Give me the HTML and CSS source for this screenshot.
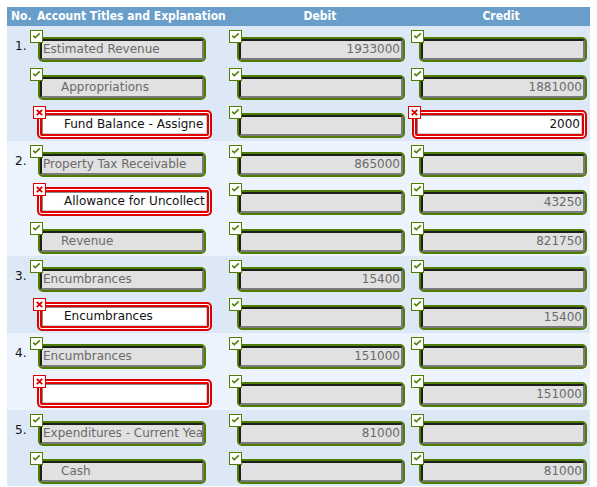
FILE: index.html
```html
<!DOCTYPE html>
<html>
<head>
<meta charset="utf-8">
<link rel="stylesheet" href="styles.css">
</head>
<body>
<svg class="defs" width="0" height="0">
  <symbol id="ok" viewBox="0 0 13 13">
    <rect x="0.5" y="0.5" width="12" height="12" fill="#fff" stroke="#4f7d00"/>
    <polyline points="3.2,5.6 5.3,7.6 9.8,3.4" fill="none" stroke="#4f8209" stroke-width="1.6"/>
  </symbol>
  <symbol id="no" viewBox="0 0 13 13">
    <rect x="0.5" y="0.5" width="12" height="12" fill="#fff" stroke="#e00000"/>
    <path d="M3.8 3.8 L9.2 9.2 M9.2 3.8 L3.8 9.2" stroke="#e00000" stroke-width="1.9"/>
  </symbol>
</svg>
<div class="sheet">
  <div class="head">
    <div class="h-no">No.</div>
    <div class="h-acct">Account Titles and Explanation</div>
    <div class="h-c">Debit</div>
    <div class="h-c">Credit</div>
  </div>

  <div class="group a">
    <div class="row">
      <div class="no">1.</div>
      <div class="cell"><div class="fld"><div class="in">Estimated Revenue</div><svg class="badge"><use href="#ok"/></svg></div></div>
      <div class="cell"><div class="fld"><div class="in num">1933000</div><svg class="badge"><use href="#ok"/></svg></div></div>
      <div class="cell"><div class="fld"><div class="in num"></div><svg class="badge"><use href="#ok"/></svg></div></div>
    </div>
    <div class="row">
      <div class="no"></div>
      <div class="cell"><div class="fld"><div class="in ind">Appropriations</div><svg class="badge"><use href="#ok"/></svg></div></div>
      <div class="cell"><div class="fld"><div class="in num"></div><svg class="badge"><use href="#ok"/></svg></div></div>
      <div class="cell"><div class="fld"><div class="in num">1881000</div><svg class="badge"><use href="#ok"/></svg></div></div>
    </div>
    <div class="row">
      <div class="no"></div>
      <div class="cell err"><div class="fld bad"><div class="in ind">Fund Balance - Assigne</div><svg class="badge"><use href="#no"/></svg></div></div>
      <div class="cell"><div class="fld"><div class="in num"></div><svg class="badge"><use href="#ok"/></svg></div></div>
      <div class="cell err credit"><div class="fld bad"><div class="in num">2000</div><svg class="badge"><use href="#no"/></svg></div></div>
    </div>
  </div>

  <div class="group b">
    <div class="row">
      <div class="no">2.</div>
      <div class="cell"><div class="fld"><div class="in">Property Tax Receivable</div><svg class="badge"><use href="#ok"/></svg></div></div>
      <div class="cell"><div class="fld"><div class="in num">865000</div><svg class="badge"><use href="#ok"/></svg></div></div>
      <div class="cell"><div class="fld"><div class="in num"></div><svg class="badge"><use href="#ok"/></svg></div></div>
    </div>
    <div class="row">
      <div class="no"></div>
      <div class="cell err"><div class="fld bad"><div class="in ind">Allowance for Uncollect</div><svg class="badge"><use href="#no"/></svg></div></div>
      <div class="cell"><div class="fld"><div class="in num"></div><svg class="badge"><use href="#ok"/></svg></div></div>
      <div class="cell"><div class="fld"><div class="in num">43250</div><svg class="badge"><use href="#ok"/></svg></div></div>
    </div>
    <div class="row">
      <div class="no"></div>
      <div class="cell"><div class="fld"><div class="in ind">Revenue</div><svg class="badge"><use href="#ok"/></svg></div></div>
      <div class="cell"><div class="fld"><div class="in num"></div><svg class="badge"><use href="#ok"/></svg></div></div>
      <div class="cell"><div class="fld"><div class="in num">821750</div><svg class="badge"><use href="#ok"/></svg></div></div>
    </div>
  </div>

  <div class="group a">
    <div class="row">
      <div class="no">3.</div>
      <div class="cell"><div class="fld"><div class="in">Encumbrances</div><svg class="badge"><use href="#ok"/></svg></div></div>
      <div class="cell"><div class="fld"><div class="in num">15400</div><svg class="badge"><use href="#ok"/></svg></div></div>
      <div class="cell"><div class="fld"><div class="in num"></div><svg class="badge"><use href="#ok"/></svg></div></div>
    </div>
    <div class="row">
      <div class="no"></div>
      <div class="cell err"><div class="fld bad"><div class="in ind">Encumbrances</div><svg class="badge"><use href="#no"/></svg></div></div>
      <div class="cell"><div class="fld"><div class="in num"></div><svg class="badge"><use href="#ok"/></svg></div></div>
      <div class="cell"><div class="fld"><div class="in num">15400</div><svg class="badge"><use href="#ok"/></svg></div></div>
    </div>
  </div>

  <div class="group b">
    <div class="row">
      <div class="no">4.</div>
      <div class="cell"><div class="fld"><div class="in">Encumbrances</div><svg class="badge"><use href="#ok"/></svg></div></div>
      <div class="cell"><div class="fld"><div class="in num">151000</div><svg class="badge"><use href="#ok"/></svg></div></div>
      <div class="cell"><div class="fld"><div class="in num"></div><svg class="badge"><use href="#ok"/></svg></div></div>
    </div>
    <div class="row">
      <div class="no"></div>
      <div class="cell err"><div class="fld bad"><div class="in ind"></div><svg class="badge"><use href="#no"/></svg></div></div>
      <div class="cell"><div class="fld"><div class="in num"></div><svg class="badge"><use href="#ok"/></svg></div></div>
      <div class="cell"><div class="fld"><div class="in num">151000</div><svg class="badge"><use href="#ok"/></svg></div></div>
    </div>
  </div>

  <div class="group a">
    <div class="row">
      <div class="no">5.</div>
      <div class="cell"><div class="fld"><div class="in">Expenditures - Current Yea</div><svg class="badge"><use href="#ok"/></svg></div></div>
      <div class="cell"><div class="fld"><div class="in num">81000</div><svg class="badge"><use href="#ok"/></svg></div></div>
      <div class="cell"><div class="fld"><div class="in num"></div><svg class="badge"><use href="#ok"/></svg></div></div>
    </div>
    <div class="row">
      <div class="no"></div>
      <div class="cell"><div class="fld"><div class="in ind">Cash</div><svg class="badge"><use href="#ok"/></svg></div></div>
      <div class="cell"><div class="fld"><div class="in num"></div><svg class="badge"><use href="#ok"/></svg></div></div>
      <div class="cell"><div class="fld"><div class="in num">81000</div><svg class="badge"><use href="#ok"/></svg></div></div>
    </div>
  </div>
</div>
</body>
</html>
```

FILE: styles.css
```css
body {
  margin: 7px;
  background: #fff;
  font-family: "DejaVu Sans", Verdana, sans-serif;
  font-size: 12px;
}

.defs {
  position: absolute;
  width: 0;
  height: 0;
}

.sheet {
  width: 584px;
}

.head,
.row {
  display: grid;
  grid-template-columns: 23px 199px 182px 180px;
}

.head {
  height: 19px;
  line-height: 19px;
  background: #699ecb;
  color: #fff;
  font-family: "DejaVu Sans Condensed", "DejaVu Sans", sans-serif;
  font-stretch: condensed;
  font-weight: bold;
  font-size: 12px;
  white-space: nowrap;
}

.h-no {
  padding-left: 4px;
}

.h-acct {
  padding-left: 7px;
}

.h-c {
  text-align: center;
}

.group.a {
  background: #dde8f6;
}

.group.b {
  background: #ecf3fc;
}

.no {
  padding: 13px 0 0 8px;
  line-height: 14px;
  color: #111;
}

.cell {
  padding: 11px 0 2px 8px;
}

.cell.err {
  padding-top: 8px;
  padding-left: 7px;
}

.cell.err.credit {
  padding-left: 1px;
}

.fld {
  position: relative;
  box-sizing: border-box;
  width: 168px;
  height: 25px;
  border: 2px solid #4f7d00;
  border-radius: 5px;
}

.fld .in {
  box-sizing: border-box;
  height: 100%;
  border-style: solid;
  border-width: 2px;
  border-color: #1e1e1e #7a7a7a #7a7a7a #1e1e1e;
  border-radius: 2px;
  background: #e1e1e1;
  color: #6a6a6a;
  line-height: 17px;
  padding: 0 1px;
  white-space: nowrap;
  overflow: hidden;
}

.fld .in.ind {
  padding-left: 19px;
}

.fld .in.num {
  text-align: right;
}

.fld.bad {
  width: 175px;
  height: 29px;
  border-color: #e00000;
  padding: 1px;
  background: #fff;
}

.fld.bad .in {
  border: 2px solid #e00000;
  background: #fff;
  color: #111;
  line-height: 19px;
  box-shadow: inset 1px 1px 0 #8a8a8a, inset -1px -1px 0 #d0d0d0;
  padding-right: 2px;
}

.fld.bad .in.ind {
  padding-left: 22px;
}

.badge {
  position: absolute;
  left: -10px;
  top: -9px;
  width: 13px;
  height: 13px;
}

.fld.bad .badge {
  left: -6px;
  top: -6px;
}
```
